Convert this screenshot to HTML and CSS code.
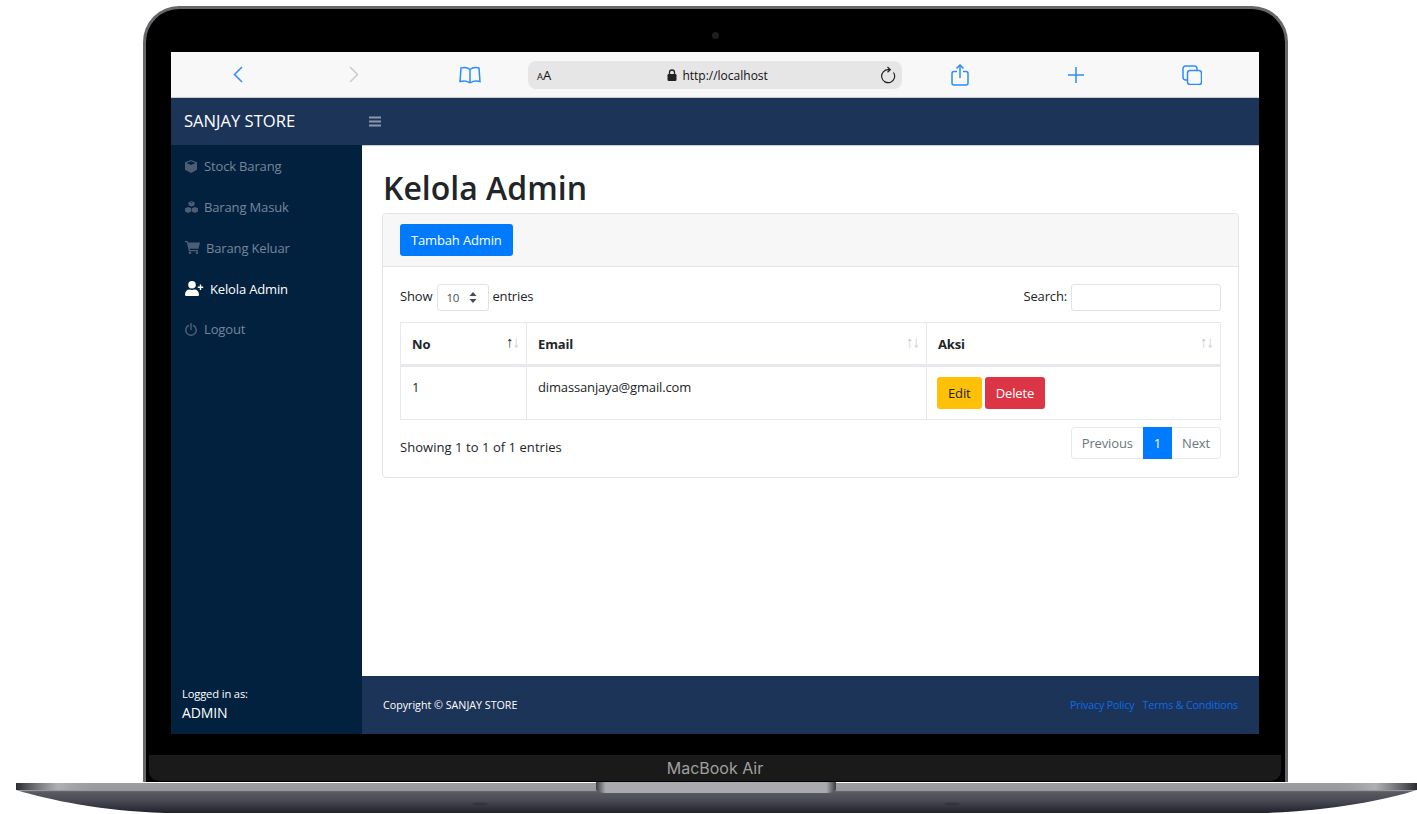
FILE: index.html
```html
<!DOCTYPE html>
<html>
  <head>
    <meta charset="UTF-8" />
    <title>Kelola Admin</title>
    <link rel="stylesheet" href="styles.css">
  </head>
  <body>
    <div class="laptop">
      <div class="lid">
        <span class="camera"></span>
        <div class="screen">
          <div class="safari">
            <span class="tool">
              <svg width="12" height="17" viewBox="0 0 12 17"><path d="M10 1 2.500 8.500l7.500 7.500" class="ico"/></svg>
            </span>
            <span class="tool">
              <svg width="12" height="17" viewBox="0 0 12 17"><path d="M2 1l7.500 7.500L2 16" class="ico ico-off"/></svg>
            </span>
            <span class="tool">
              <svg width="22" height="18" viewBox="0 0 22 18"><path d="M11 3.500C9 1.700 5 1.300 2 2L1 15.500c3-.8 7-.6 9 1h2c2-1.600 6-1.800 9-1L20 2c-3-.7-7-.3-9 1.500zM11 3.500v13" class="ico"/></svg>
            </span>
            <div class="address">
              <span class="aa"><small>A</small>A</span>
              <span class="url">
                <svg width="10" height="12" viewBox="0 0 10 12"><path d="M2.500 5V3.500a2.500 2.500 0 0 1 5 0V5" fill="none" stroke="#222" stroke-width="1.300"/><rect x="0.500" y="5" width="9" height="7" rx="1.200" fill="#222"/></svg>
                http://localhost
              </span>
              <svg width="16" height="18" viewBox="0 0 16 18"><path d="M13.500 6.500a6.500 6.500 0 1 1-5-2.800H10M7.500 1 10.300 3.700 7.500 6.300" fill="none" stroke="#222" stroke-width="1.200"/></svg>
            </div>
            <span class="tool">
              <svg width="18" height="22" viewBox="0 0 18 22"><path d="M6 7.500H3a2 2 0 0 0-2 2V19a2 2 0 0 0 2 2h12a2 2 0 0 0 2-2V9.500a2 2 0 0 0-2-2h-3M9 14V1.500M5.500 4.500 9 1l3.500 3.500" class="ico"/></svg>
            </span>
            <span class="tool">
              <svg width="16" height="16" viewBox="0 0 16 16"><path d="M8 0v16M0 8h16" class="ico"/></svg>
            </span>
            <span class="tool">
              <svg width="20" height="20" viewBox="0 0 20 20"><rect x="5.500" y="5.500" width="14" height="14" rx="2.500" class="ico"/><path d="M5 15H3.500A2.500 2.500 0 0 1 1 12.500v-9A2.500 2.500 0 0 1 3.500 1h9A2.500 2.500 0 0 1 15 3.500V5" class="ico"/></svg>
            </span>
          </div>

          <div class="topnav">
            <a class="brand">SANJAY STORE</a>
            <svg class="burger" width="12" height="11" viewBox="0 0 12 11"><path d="M0 1.500h12M0 5.500h12M0 9.500h12" stroke="#8d97ab" stroke-width="2"/></svg>
          </div>

          <div class="app">
            <div class="sidenav">
              <div class="menu">
                <a class="link">
                  <svg class="link-icon" width="12" height="13" viewBox="0 0 12 13"><path d="M6 0 12 2.300v7.500L6 13 0 9.800V2.300zM1.500 3 6 5l4.500-2L6 1.300z"/></svg>
                  Stock Barang
                </a>
                <a class="link link-narrow">
                  <svg class="link-icon" width="13" height="12" viewBox="0 0 13 12"><path d="M6.500 0 9.500 1.300v3L6.500 5.600 3.500 4.300v-3zM5.200 1.600 6.500 2.200l1.300-.6-1.300-.5zM3.200 6 6.200 7.300v3.300L3.200 12 0 10.600V7.300zM9.800 6 13 7.300v3.300L9.800 12l-3-1.400V7.300z"/></svg>
                  Barang Masuk
                </a>
                <a class="link link-narrow">
                  <svg class="link-icon" width="15" height="13" viewBox="0 0 15 13"><path d="M0 0h2.800l.4 1.500H15l-1.500 6.200H4.600l.3 1.300H13v1.300H3.800L1.800 1.300H0z"/><circle cx="5" cy="11.700" r="1.300"/><circle cx="12" cy="11.700" r="1.300"/></svg>
                  Barang Keluar
                </a>
                <a class="link link-narrow link-active">
                  <svg class="link-icon" width="19" height="15" viewBox="0 0 19 15"><circle cx="7" cy="3.800" r="3.800"/><path d="M0 13.500C0 10.500 2 8.500 4.500 8.500c1.500.6 3.500.6 5 0 2.500 0 4.500 2 4.500 5 0 1-.6 1.500-1.500 1.500h-11C.6 15 0 14.500 0 13.500z"/><path d="M14.800 3.500h1.400v2h2v1.400h-2v2h-1.400v-2h-2V5.500h2z"/></svg>
                  Kelola Admin
                </a>
                <a class="link">
                  <svg class="link-icon" width="12" height="13" viewBox="0 0 12 13"><path d="M3.500 2.500a5.200 5.200 0 1 0 5 0M6 .5v6" fill="none" stroke="currentColor" stroke-width="1.500" stroke-linecap="round"/></svg>
                  Logout
                </a>
              </div>
              <div class="sidenav-footer">
                <div class="small">Logged in as:</div>
                ADMIN
              </div>
            </div>

            <div class="content">
              <main class="main">
                <h1>Kelola Admin</h1>
                <div class="card">
                  <div class="card-header">
                    <button class="btn btn-primary">Tambah Admin</button>
                  </div>
                  <div class="card-body">
                    <div class="dt-top">
                      <label class="dt-length">Show
                        <span class="select">10
                          <svg width="8" height="11" viewBox="0 0 8 11"><path d="M4 0l3.500 4H.5zM4 11 .5 7h7z" fill="#444c56"/></svg>
                        </span>
                        entries</label>
                      <label class="dt-search">Search: <input type="text" /></label>
                    </div>
                    <table class="table">
                      <thead>
                        <tr>
                          <th class="col-no">No <span class="sort"><b>↑</b>↓</span></th>
                          <th class="col-email">Email <span class="sort">↑↓</span></th>
                          <th>Aksi <span class="sort">↑↓</span></th>
                        </tr>
                      </thead>
                      <tbody>
                        <tr>
                          <td>1</td>
                          <td>dimassanjaya@gmail.com</td>
                          <td class="actions">
                            <button class="btn btn-warning">Edit</button>
                            <button class="btn btn-danger">Delete</button>
                          </td>
                        </tr>
                      </tbody>
                    </table>
                    <div class="dt-bottom">
                      <div class="dt-info">Showing 1 to 1 of 1 entries</div>
                      <div class="pagination">
                        <a class="page">Previous</a>
                        <a class="page page-active">1</a>
                        <a class="page">Next</a>
                      </div>
                    </div>
                  </div>
                </div>
              </main>
              <footer class="footer">
                <div>Copyright &copy; SANJAY STORE</div>
                <div class="footer-links"><a>Privacy Policy</a><a>Terms &amp; Conditions</a></div>
              </footer>
            </div>
          </div>
        </div>
        <div class="chin">MacBook Air</div>
      </div>
      <svg class="base" width="1417" height="32" viewBox="0 0 1417 32">
        <defs>
          <linearGradient id="body" x1="0" y1="0" x2="0" y2="1">
            <stop offset="0" stop-color="#9d9ea3"/>
            <stop offset="0.25" stop-color="#96979c"/>
            <stop offset="0.29" stop-color="#5a5b63"/>
            <stop offset="0.6" stop-color="#484952"/>
            <stop offset="1" stop-color="#20212b"/>
          </linearGradient>
          <linearGradient id="ends" x1="0" y1="0" x2="1" y2="0">
            <stop offset="0" stop-color="#2b2c32"/>
            <stop offset="0.03" stop-color="#b5b5b9" stop-opacity="0.8"/>
            <stop offset="0.06" stop-color="#9d9ea3" stop-opacity="0"/>
            <stop offset="0.94" stop-color="#9d9ea3" stop-opacity="0"/>
            <stop offset="0.97" stop-color="#b5b5b9" stop-opacity="0.8"/>
            <stop offset="1" stop-color="#2b2c32"/>
          </linearGradient>
          <linearGradient id="notch" x1="0" y1="0" x2="1" y2="0">
            <stop offset="0" stop-color="#3d3e44"/>
            <stop offset="0.04" stop-color="#a9a9af"/>
            <stop offset="0.96" stop-color="#a9a9af"/>
            <stop offset="1" stop-color="#3d3e44"/>
          </linearGradient>
        </defs>
        <path d="M16 1H1417V8C1385 18 1330 29 1262 31H165C100 29 50 18 16 8Z" fill="url(#body)"/>
        <path d="M16 1H1417V8H16Z" fill="url(#ends)"/>
        <path d="M596 0H836V7Q836 11 826 11H606Q596 11 596 7Z" fill="url(#notch)"/>
        <ellipse cx="480" cy="22" rx="8" ry="1.500" fill="#33343c"/>
        <ellipse cx="952" cy="22" rx="8" ry="1.500" fill="#33343c"/>
      </svg>
    </div>
  </body>
</html>
```

FILE: styles.css
```css
* {
  box-sizing: border-box;
}

body {
  margin: 0;
  background-color: #fff;
  font-family: "Open Sans", "Noto Sans", sans-serif;
  font-size: 13px;
  letter-spacing: -0.15px;
  color: #212529;
  overflow: hidden;
}

.laptop {
  width: 1417px;
  height: 814px;
  padding-top: 6px;
}

.lid {
  position: relative;
  width: 1145px;
  height: 776px;
  margin-left: 143px;
  padding: 43px 26px 0 25px;
  background-color: #000;
  border: 3px solid #66676b;
  border-bottom: none;
  border-radius: 36px 36px 0 0;
}

.camera {
  position: absolute;
  top: 23px;
  left: 566px;
  width: 7px;
  height: 7px;
  border-radius: 50%;
  background-color: #1c1e22;
}

.screen {
  width: 1088px;
  height: 682px;
  display: flex;
  flex-direction: column;
  overflow: hidden;
}

.chin {
  height: 26px;
  margin: 21px -22px 0;
  background-color: #1a1a1a;
  border-radius: 0 0 10px 10px;
  color: #a0a0a0;
  font-family: Inter, sans-serif;
  font-size: 16px;
  letter-spacing: 0;
  line-height: 27px;
  text-align: center;
}

.base {
  display: block;
}

/* browser bar */
.safari {
  height: 46px;
  flex-shrink: 0;
  display: flex;
  align-items: center;
  padding: 0 9px;
  background-color: #f8f8f8;
  border-bottom: 1px solid #c9cbcd;
}

.tool {
  width: 116px;
  display: flex;
  justify-content: center;
  align-items: center;
}

.ico {
  fill: none;
  stroke: #2b8cff;
  stroke-width: 1.500;
}

.ico-off {
  stroke: #c9cbcf;
}

.address {
  flex: 1;
  height: 28px;
  margin-top: 1px;
  display: flex;
  align-items: center;
  justify-content: space-between;
  padding: 0 6px 0 9px;
  background-color: #e6e6e6;
  border-radius: 8px;
  color: #111;
}

.aa {
  font-size: 13px;
  letter-spacing: 0;
}

.aa small {
  font-size: 9.500px;
}

.url {
  font-size: 12px;
  letter-spacing: 0;
  display: flex;
  align-items: center;
  gap: 5px;
  margin-left: 4px;
}

/* top navbar */
.topnav {
  height: 47px;
  flex-shrink: 0;
  display: flex;
  align-items: center;
  padding-bottom: 1px;
  background-color: #1d3459;
}

.brand {
  width: 191px;
  padding-left: 13px;
  margin-top: -2px;
  color: #fff;
  font-size: 16.600px;
  letter-spacing: 0;
}

.burger {
  margin-left: 7px;
}

.app {
  flex: 1;
  display: flex;
  min-height: 0;
}

/* sidebar */
.sidenav {
  width: 191px;
  flex-shrink: 0;
  display: flex;
  flex-direction: column;
  justify-content: space-between;
  background-color: #02213f;
}

.menu {
  padding-top: 1px;
}

.link {
  height: 40.750px;
  display: flex;
  align-items: center;
  gap: 7px;
  padding-left: 14px;
  color: #76869a;
  fill: #4b5e75;
}

.link-icon {
  color: #4b5e75;
}

.link-narrow {
  gap: 6px;
}

.link-active {
  color: #fff;
  fill: #fff;
}

.sidenav-footer {
  padding: 0 11px 11px;
  color: #fff;
  font-size: 14px;
  line-height: 20px;
}

.small {
  font-size: 11.200px;
  line-height: 18px;
}

/* page */
.content {
  flex: 1;
  display: flex;
  flex-direction: column;
}

.main {
  flex: 1;
  padding: 0 20px;
  background-color: #fff;
  border-top: 1px solid #c5cbd5;
}

h1 {
  margin: 21px 0 5px 1px;
  font-size: 32px;
  font-weight: 600;
  letter-spacing: 0;
  line-height: 41px;
}

.card {
  border: 1px solid #e4e4e6;
  border-radius: 4px;
}

.card-header {
  height: 53px;
  padding: 10px 17px;
  background-color: #f7f7f7;
  border-bottom: 1px solid #e4e4e6;
  border-radius: 4px 4px 0 0;
}

.card-body {
  height: 210px;
  padding: 17px 17px 0;
}

.btn {
  height: 32px;
  padding: 0 10px;
  border: 1px solid transparent;
  border-radius: 3px;
  font-family: inherit;
  font-size: 13px;
  letter-spacing: -0.15px;
  cursor: pointer;
}

.btn-primary {
  background-color: #007bff;
  color: #fff;
}

.btn-warning {
  background-color: #ffc107;
  color: #212529;
}

.btn-danger {
  background-color: #dc3545;
  color: #fff;
}

.dt-top {
  height: 27px;
  display: flex;
  justify-content: space-between;
}

.dt-length,
.dt-search {
  display: flex;
  align-items: flex-start;
  gap: 4px;
  line-height: 24px;
}

.select {
  width: 52px;
  height: 27px;
  margin: 0 -1px 0 1px;
  display: flex;
  align-items: center;
  justify-content: space-between;
  padding: 0 11px 0 8px;
  border: 1px solid #dfe3e8;
  border-radius: 3px;
  font-size: 11.500px;
  color: #495057;
}

.dt-search input {
  width: 150px;
  height: 27px;
  border: 1px solid #dfe3e8;
  border-radius: 3px;
}

.table {
  width: 821px;
  margin-top: 11px;
  table-layout: fixed;
  border-collapse: collapse;
}

.table th,
.table td {
  padding: 11px;
  border: 1px solid #e6e8eb;
  text-align: left;
  vertical-align: top;
}

.table th {
  position: relative;
  height: 43px;
  padding-top: 12px;
  border-bottom-width: 3px;
  font-weight: 700;
}

.table td {
  height: 51px;
}

.table td.actions {
  padding: 10px;
}

.col-no {
  width: 126px;
}

.col-email {
  width: 400px;
}

.sort {
  position: absolute;
  top: 10px;
  right: 7px;
  color: #c4c8cd;
  font-family: "Liberation Sans", sans-serif;
  font-size: 15px;
  font-weight: 400;
  letter-spacing: -1px;
}

.sort b {
  color: #212529;
  font-weight: 400;
}

.dt-bottom {
  display: flex;
  justify-content: space-between;
  align-items: center;
  margin-top: 7px;
}

.dt-info {
  margin-top: 8px;
  letter-spacing: 0.05px;
}

.pagination {
  display: flex;
  height: 32px;
  border: 1px solid #e6e8eb;
  border-radius: 3px;
  color: #6c757d;
}

.page {
  display: flex;
  align-items: center;
  padding: 0 10px;
}

.page-active {
  padding: 0 11px;
  background-color: #007bff;
  color: #fff;
  margin: -1px 0;
}

.footer {
  height: 58px;
  display: flex;
  justify-content: space-between;
  align-items: center;
  padding: 0 21px 1px;
  background-color: #1d3459;
  color: #fff;
  font-size: 10.700px;
  letter-spacing: 0;
}

.footer-links {
  display: flex;
  gap: 8px;
  letter-spacing: -0.15px;
  color: #0b6bea;
}
```
